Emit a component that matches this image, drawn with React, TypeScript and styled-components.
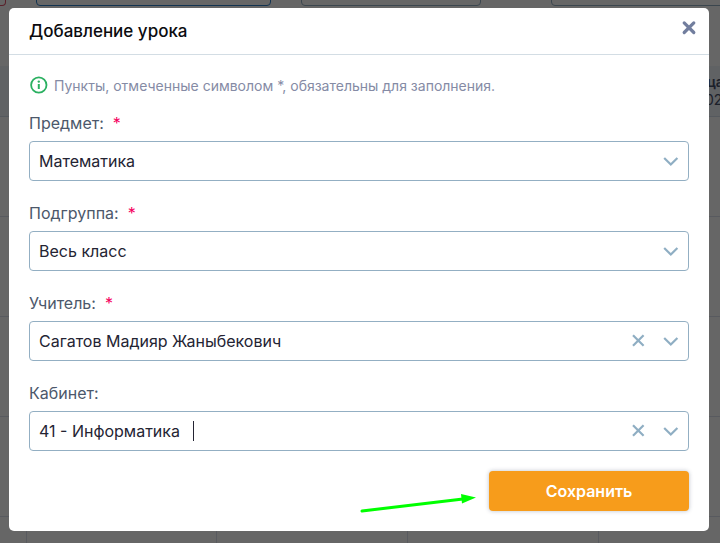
import React, { useState } from "react";
import styled, { createGlobalStyle } from "styled-components";

const GlobalStyle = createGlobalStyle`
  *, *::before, *::after { box-sizing: border-box; }
  body {
    margin: 0;
    background: #fff;
    font-family: Inter, "Noto Sans", "Liberation Sans", sans-serif;
    font-size: 16px;
    color: #242433;
  }
  button, input, select { font: inherit; color: inherit; }
`;

/* Timetable page behind the dialog */
const Page = styled.div`
  position: fixed;
  inset: 0;
  overflow: hidden;
`;

const Filters = styled.div`
  display: flex;
  align-items: flex-end;
  gap: 30px;
  height: 6px;
`;

const Filter = styled.div<{ $width: number; $color: string; $gap?: number; $open?: boolean }>`
  flex: none;
  width: ${(p) => p.$width}px;
  height: 40px;
  margin-left: ${(p) => p.$gap ?? 0}px;
  border: 1px solid ${(p) => p.$color};
  border-left-width: ${(p) => (p.$open ? 0 : 1)}px;
  border-radius: ${(p) => (p.$open ? "0 4px 4px 0" : "4px")};
`;

const Timetable = styled.table`
  width: 790px;
  margin-top: 60px;
  table-layout: fixed;
  border-collapse: collapse;
`;

const DayHead = styled.th`
  height: 50px;
  padding: 0;
  border-bottom: 1px solid #d5deea;
  background: #f0f4fb;
  font-size: 14px;
  line-height: 18px;
  font-weight: 400;
  color: #48506a;

  strong { display: block; font-weight: 600; }
`;

const Slot = styled.td`
  height: 100px;
  padding: 0;
  border: 1px solid #dbe1ee;

  &:first-child { border-left: 0; }
`;

const NumberCol = styled.col`
  width: 26px;
`;

const Overlay = styled.div`
  position: relative;
  display: flex;
  align-items: flex-start;
  min-height: 100vh;
  padding: 8px 11px 8px 9px;
  background: rgba(0, 0, 0, 0.6);
`;

/* Dialog */
const Dialog = styled.section`
  flex: 1;
  min-width: 0;
  border-radius: 5px;
  background: #fff;
`;

const Header = styled.header`
  display: flex;
  align-items: center;
  justify-content: space-between;
  height: 47px;
  padding: 0 12px 0 20px;
  border-bottom: 1px solid #d3dde4;
`;

const Title = styled.h1`
  margin: 0;
  font-size: 17px;
  line-height: 24px;
  font-weight: 500;
  color: #0b0b0f;
`;

const IconButton = styled.button`
  display: flex;
  flex: none;
  padding: 0;
  border: 0;
  background: none;
  cursor: pointer;
`;

const CloseButton = styled(IconButton)`
  align-self: flex-start;
  padding-top: 12px;
`;

const Form = styled.form`
  display: flex;
  flex-direction: column;
  gap: 20px;
  padding: 20px;
`;

const Intro = styled.div`
  display: flex;
  flex-direction: column;
  gap: 15px;
`;

const Note = styled.p`
  display: flex;
  align-items: center;
  gap: 6px;
  height: 21px;
  margin: 0;
  font-size: 14px;
  line-height: 21px;
  color: #858ba5;
`;

const Field = styled.div`
  display: flex;
  flex-direction: column;
  gap: 6px;
`;

const Label = styled.label`
  font-size: 16px;
  line-height: 24px;
  color: #4c586b;
`;

const Required = styled.span`
  margin-left: 9px;
  color: #f5005e;
`;

const Box = styled.div`
  display: grid;
  grid-template-columns: 1fr;
  height: 40px;
  border: 1px solid #93afc3;
  border-radius: 4px;
`;

const Select = styled.select`
  grid-area: 1 / 1;
  width: 100%;
  padding: 0 40px 0 9px;
  border: 0;
  outline: 0;
  appearance: none;
  background: none;
`;

const Arrow = styled.span`
  display: flex;
  grid-area: 1 / 1;
  place-self: center end;
  margin-right: 9px;
  pointer-events: none;
`;

const SearchBox = styled.div`
  display: flex;
  align-items: center;
  height: 40px;
  padding: 0 9px;
  border: 1px solid #93afc3;
  border-radius: 4px;
`;

const SearchInput = styled.input`
  field-sizing: content;
  min-width: 0;
  padding: 0;
  border: 0;
  outline: 0;
  background: none;
`;

const Caret = styled.span`
  width: 1px;
  height: 20px;
  margin-left: 13px;
  background: #242433;
`;

const BoxActions = styled.div`
  display: flex;
  align-items: center;
  gap: 16px;
  margin-left: auto;
`;

const Footer = styled.footer`
  position: relative;
  display: flex;
  justify-content: flex-end;
`;

const Submit = styled.button`
  width: 200px;
  height: 40px;
  border: 0;
  border-radius: 4px;
  background: #f79c1b;
  box-shadow: 0 0 4px rgba(30, 50, 80, 0.3);
  color: #fff;
  font-weight: 600;
  cursor: pointer;
`;

const Pointer = styled.svg`
  position: absolute;
  right: 212px;
  top: 22px;
`;

const Chevron = () => (
  <svg width="16" height="16" viewBox="0 0 16 16" fill="none" stroke="#8faec3" strokeWidth="2.2" aria-hidden="true">
    <path d="M1.200 5 7.800 11.500 14.400 5" />
  </svg>
);

const Cross = () => (
  <svg width="16" height="16" viewBox="0 0 16 16" fill="none" stroke="#8faec3" strokeWidth="2.2" aria-hidden="true">
    <path d="m2 2.200 10.600 10.600m0-10.600-10.600 10.600" />
  </svg>
);

type FieldProps = { id: string; label: string; value: string; required?: boolean; active?: boolean };

const FieldLabel = ({ id, label, required }: Omit<FieldProps, "value">) => (
  <Label htmlFor={id}>
    {label}:{required && <Required>*</Required>}
  </Label>
);

function SelectField({ id, label, value, required }: FieldProps) {
  return (
    <Field>
      <FieldLabel id={id} label={label} required={required} />
      <Box>
        <Select id={id} defaultValue={value} required={required}>
          <option>{value}</option>
        </Select>
        <Arrow><Chevron /></Arrow>
      </Box>
    </Field>
  );
}

function SearchField({ id, label, value, required, active }: FieldProps) {
  const [text, setText] = useState(value);
  return (
    <Field>
      <FieldLabel id={id} label={label} required={required} />
      <SearchBox>
        <SearchInput id={id} value={text} required={required} autoComplete="off" onChange={(e) => setText(e.target.value)} />
        {active && <Caret />}
        <BoxActions>
          <IconButton type="button" aria-label="Очистить" onClick={() => setText("")}><Cross /></IconButton>
          <IconButton type="button" aria-label="Открыть список"><Chevron /></IconButton>
        </BoxActions>
      </SearchBox>
    </Field>
  );
}

const days = [0, 1, 2, 3];
const lessons = [1, 2, 3, 4, 5];

export default function App() {
  return (
    <>
      <GlobalStyle />
      <Page aria-hidden="true">
        <Filters>
          <Filter $width={6} $color="#e0526a" $open />
          <Filter $width={235} $color="#2f80c8" />
          <Filter $width={180} $color="#93afc3" />
          <Filter $width={235} $color="#93afc3" $gap={40} />
        </Filters>
        <Timetable>
          <colgroup>
            <NumberCol />
            {days.map((d) => <col key={d} />)}
          </colgroup>
          <thead>
            <tr>
              <DayHead />
              <DayHead />
              <DayHead />
              <DayHead />
              <DayHead><strong>Пятница</strong>14.04.2023</DayHead>
            </tr>
          </thead>
          <tbody>
            {lessons.map((n) => (
              <tr key={n}>
                <Slot />
                {days.map((d) => <Slot key={d} />)}
              </tr>
            ))}
          </tbody>
        </Timetable>
      </Page>
      <Overlay>
        <Dialog role="dialog" aria-labelledby="dialog-title">
          <Header>
            <Title id="dialog-title">Добавление урока</Title>
            <CloseButton type="button" aria-label="Закрыть">
              <svg width="16" height="16" viewBox="0 0 16 16" fill="none" stroke="#727e9e" strokeWidth="3.2" strokeLinecap="round" aria-hidden="true">
                <path d="m3.2 2.9 9.6 9.6m0-9.6-9.6 9.6" />
              </svg>
            </CloseButton>
          </Header>
          <Form onSubmit={(e) => e.preventDefault()}>
            <Intro>
              <Note>
                <svg width="19" height="19" viewBox="0 0 19 19" fill="none" stroke="#2bb061" aria-hidden="true">
                  <circle cx="9.8" cy="9" r="7.7" strokeWidth="1.8" />
                  <path d="M9.8 8v5" strokeWidth="2" />
                  <circle cx="9.8" cy="5.6" r="1.2" fill="#2bb061" stroke="none" />
                </svg>
                Пункты, отмеченные символом *, обязательны для заполнения.
              </Note>
              <SelectField id="subject" label="Предмет" value="Математика" required />
            </Intro>
            <SelectField id="group" label="Подгруппа" value="Весь класс" required />
            <SearchField id="teacher" label="Учитель" value="Сагатов Мадияр Жаныбекович" required />
            <SearchField id="room" label="Кабинет" value="41 - Информатика" active />
            <Footer>
              <Pointer width="117" height="20" viewBox="0 0 117 20" aria-hidden="true">
                <path d="M2 18 103 6" stroke="#0f0" strokeWidth="3" strokeLinecap="round" />
                <path d="M101 1 116 4.500 102 10.500Z" fill="#0f0" />
              </Pointer>
              <Submit type="submit">Сохранить</Submit>
            </Footer>
          </Form>
        </Dialog>
      </Overlay>
    </>
  );
}
